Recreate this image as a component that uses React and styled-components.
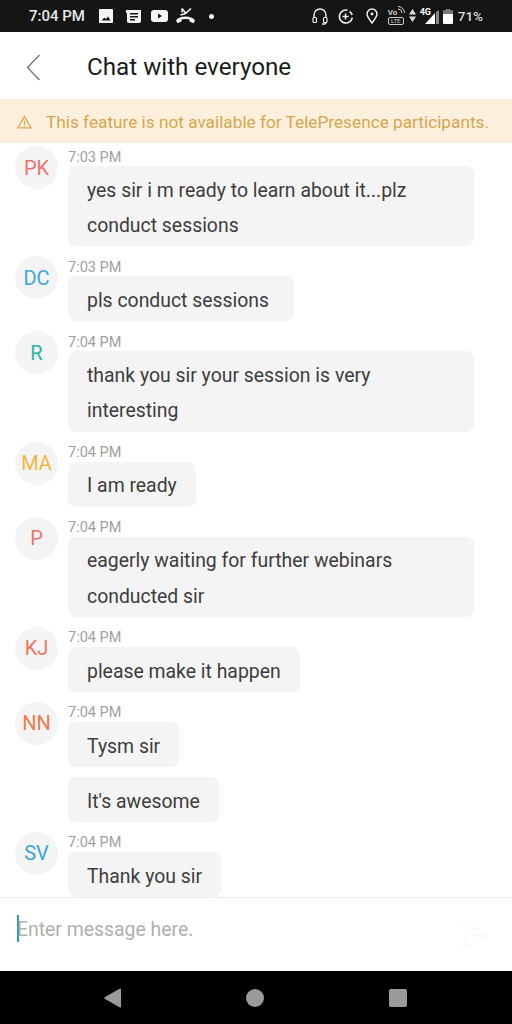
import styled, { createGlobalStyle } from "styled-components";

const messages = [
  { initials: "PK", color: "#e8746d", time: "7:03 PM", texts: ["yes sir i m ready to learn about it...plz conduct sessions"] },
  { initials: "DC", color: "#3ea8d4", time: "7:03 PM", texts: ["pls conduct sessions"], padRight: 25 },
  { initials: "R", color: "#2fb3a0", time: "7:04 PM", texts: ["thank you sir your session is very interesting"] },
  { initials: "MA", color: "#f2b63f", time: "7:04 PM", texts: ["I am ready"] },
  { initials: "P", color: "#f0766c", time: "7:04 PM", texts: ["eagerly waiting for further webinars conducted sir"] },
  { initials: "KJ", color: "#ee7660", time: "7:04 PM", texts: ["please make it happen"] },
  { initials: "NN", color: "#ee7b48", time: "7:04 PM", texts: ["Tysm sir", "It's awesome"] },
  { initials: "SV", color: "#3aa5d8", time: "7:04 PM", texts: ["Thank you sir"] },
];

export default function App() {
  return (
    <Screen>
      <GlobalStyle />
      <StatusBar>
        <StatusGroup>
          <Clock>7:04 PM</Clock>
          <Slot $left={15}>
            <svg width="14" height="14" viewBox="0 0 14 14">
              <path fill="#f4f4f4" fillRule="evenodd" d="M1 0h12a1 1 0 0 1 1 1v12a1 1 0 0 1-1 1H1a1 1 0 0 1-1-1V1a1 1 0 0 1 1-1z M2.500 11.500h9L9 7.500 7 10 5.500 8.500z" />
            </svg>
          </Slot>
          <Slot $left={13}>
            <svg width="15" height="13" viewBox="0 0 15 13">
              <path fill="#f4f4f4" fillRule="evenodd" d="M0 0h15v11a2 2 0 0 1-2 2H3a2 2 0 0 1-2-2V3H0z M4 3v1.500h8V3z M4 6v1.500h8V6z M4 9v1.500h5V9z" />
            </svg>
          </Slot>
          <Slot $left={10}>
            <svg width="17" height="12" viewBox="0 0 17 12">
              <path fill="#f4f4f4" fillRule="evenodd" d="M3 0h11a3 3 0 0 1 3 3v6a3 3 0 0 1-3 3H3a3 3 0 0 1-3-3V3a3 3 0 0 1 3-3z M7 3.500v5L11 6z" />
            </svg>
          </Slot>
          <Slot $left={8}>
            <svg width="19" height="16" viewBox="0 0 19 16">
              <path fill="none" stroke="#f4f4f4" strokeWidth="1.500" d="M4.500 7l5 -1.500L15 .5" />
              <path fill="none" stroke="#f4f4f4" strokeWidth="1.500" d="M6 .5l4 5M6 .5v4" />
              <path fill="#f4f4f4" d="M0 12.500c2-3 5.500-4 9.500-4s7.500 1 9.500 4l-1.500 2.800-4-1.800v-2c-2.500-.7-5.500-.7-8 0v2l-4 1.800z" />
            </svg>
          </Slot>
          <Dot />
        </StatusGroup>
        <StatusGroup>
          <Slot>
            <svg width="16" height="17" viewBox="0 0 16 17">
              <path fill="none" stroke="#eee" strokeWidth="1.400" d="M2 10V7a6 6 0 0 1 12 0v3M14 13v1.500a1.500 1.500 0 0 1-1.500 1.500H10" />
              <rect x="1" y="9.500" width="3.500" height="5" rx="1" fill="#151515" stroke="#eee" strokeWidth="1.200" />
              <rect x="11.500" y="9.500" width="3.500" height="5" rx="1" fill="#151515" stroke="#eee" strokeWidth="1.200" />
            </svg>
          </Slot>
          <Slot $left={10}>
            <svg width="15" height="15" viewBox="0 0 15 15">
              <path fill="none" stroke="#eee" strokeWidth="1.600" d="M9.500 1.200a6.500 6.500 0 1 0 4.800 7.500M11.500 2.500a6.500 6.500 0 0 1 2.700 3.500" />
              <path stroke="#eee" strokeWidth="1.500" d="M7.500 4.500v6M4.500 7.500h6" />
            </svg>
          </Slot>
          <Slot $left={13}>
            <svg width="12" height="16" viewBox="0 0 12 16">
              <path fill="none" stroke="#eee" strokeWidth="1.500" d="M6 15C3.500 11.500 1 8.500 1 6a5 5 0 0 1 10 0c0 2.500-2.500 5.500-5 9z" />
              <circle cx="6" cy="6" r="1.400" fill="#eee" />
            </svg>
          </Slot>
          <Volte>
            <VolteArcs width="7" height="9" viewBox="0 0 7 9">
              <path fill="none" stroke="#ccc" strokeWidth="1" d="M0 3a4 4 0 0 1 4 4M0 .5a6.500 6.500 0 0 1 6.500 6.500" />
            </VolteArcs>
            <VolteTop>Vo</VolteTop>
            <VolteBox>LTE</VolteBox>
          </Volte>
          <Slot $left={5}>
            <svg width="7" height="14" viewBox="0 0 7 14">
              <path fill="#ddd" d="M3.500 0L7 5.500H0zM0 7.500h7l-3.500 5.500z" />
            </svg>
          </Slot>
          <Signal>
            <NetworkType>4G</NetworkType>
            <svg width="14" height="14" viewBox="0 0 14 14">
              <path fill="#fff" d="M10 3v11H0z" />
              <path fill="#888" d="M11 2l3-2v14h-3z" />
            </svg>
          </Signal>
          <Slot $left={4}>
            <svg width="10" height="15" viewBox="0 0 10 15">
              <path fill="#777" d="M3 0h4v1h2a1 1 0 0 1 1 1v3H0V2a1 1 0 0 1 1-1h2z" />
              <path fill="#fff" d="M0 5h10v9a1 1 0 0 1-1 1H1a1 1 0 0 1-1-1z" />
            </svg>
          </Slot>
          <Battery>71%</Battery>
        </StatusGroup>
      </StatusBar>

      <Header>
        <BackButton>
          <svg width="15" height="27" viewBox="0 0 15 27">
            <path fill="none" stroke="#777" strokeWidth="1.400" d="M13.500 1L1.500 13.500 13.500 26" />
          </svg>
        </BackButton>
        <Title>Chat with everyone</Title>
      </Header>

      <Notice>
        <svg width="15" height="14" viewBox="0 0 15 14">
          <path fill="none" stroke="#d8a64e" strokeWidth="1.300" d="M7.500 1.500L14 12.800H1z" />
          <path stroke="#d8a64e" strokeWidth="1.300" d="M7.500 5.500v4M7.500 10.300v1.200" />
        </svg>
        <NoticeText>This feature is not available for TelePresence participants.</NoticeText>
      </Notice>

      <MessageList>
        {messages.map((msg) => (
          <MessageRow key={msg.initials}>
            <Avatar $color={msg.color}>{msg.initials}</Avatar>
            <MessageBody>
              <Time>{msg.time}</Time>
              {msg.texts.map((text) => (
                <Bubble key={text} $padRight={msg.padRight}>{text}</Bubble>
              ))}
            </MessageBody>
          </MessageRow>
        ))}
      </MessageList>

      <Composer>
        <Caret />
        <Placeholder>Enter message here.</Placeholder>
        <SendIcon>
          <svg width="27" height="28" viewBox="0 0 27 28">
            <path fill="none" stroke="#f8f8f8" strokeWidth="1.200" d="M1 1l25 13L1 27l4-13zM5 14h21" />
          </svg>
        </SendIcon>
      </Composer>

      <NavBar>
        <svg width="18" height="20" viewBox="0 0 18 20">
          <path fill="#9a9a9a" d="M17 1v18a1 1 0 0 1-1 .6L1 11a1.200 1.200 0 0 1 0-2L16 .4a1 1 0 0 1 1 .6z" />
        </svg>
        <HomeButton />
        <RecentButton />
      </NavBar>
    </Screen>
  );
}

const GlobalStyle = createGlobalStyle`
  html, body {
    margin: 0;
    padding: 0;
    background: #fff;
  }
  * {
    box-sizing: border-box;
  }
`;

const Screen = styled.div`
  width: 512px;
  height: 1024px;
  display: flex;
  flex-direction: column;
  overflow: hidden;
  font-family: Roboto, "Liberation Sans", sans-serif;
  background: #fff;
`;

const StatusBar = styled.div`
  height: 32px;
  flex-shrink: 0;
  display: flex;
  align-items: center;
  justify-content: space-between;
  padding: 0 29px;
  background: #151515;
  color: #fff;
`;

const StatusGroup = styled.div`
  display: flex;
  align-items: center;
`;

const Slot = styled.span`
  display: flex;
  margin-left: ${(props) => props.$left || 0}px;
`;

const Clock = styled.span`
  width: 55px;
  font-size: 15px;
  font-weight: 500;
  white-space: nowrap;
  color: #e8e8e8;
`;

const Dot = styled.span`
  width: 5px;
  height: 5px;
  margin-left: 14px;
  border-radius: 50%;
  background: #f4f4f4;
`;

const Volte = styled.div`
  position: relative;
  width: 16px;
  margin-left: 10px;
  display: flex;
  flex-direction: column;
  align-items: flex-start;
  color: #ccc;
`;

const VolteArcs = styled.svg`
  position: absolute;
  top: -2px;
  right: -1px;
`;

const VolteTop = styled.span`
  font-size: 8px;
  font-weight: 700;
  line-height: 9px;
`;

const VolteBox = styled.span`
  width: 16px;
  height: 8px;
  border: 1px solid #ccc;
  border-radius: 2px;
  font-size: 6px;
  line-height: 6px;
  text-align: center;
`;

const Signal = styled.div`
  position: relative;
  width: 19px;
  height: 15px;
  margin-left: 4px;
  display: flex;
  justify-content: flex-end;
  align-items: flex-end;
`;

const NetworkType = styled.span`
  position: absolute;
  left: 0;
  top: -2px;
  font-size: 9px;
  font-weight: 700;
`;

const Battery = styled.span`
  margin-left: 5px;
  font-size: 13.500px;
  font-weight: 500;
  color: #ddd;
`;

const Header = styled.div`
  height: 68px;
  flex-shrink: 0;
  display: flex;
  align-items: center;
  padding-top: 3px;
  border-bottom: 1px solid #ececec;
  background: #fff;
`;

const BackButton = styled.div`
  width: 87px;
  padding-left: 26px;
  display: flex;
  align-items: center;
`;

const Title = styled.div`
  font-size: 24.200px;
  color: #1c1c1c;
`;

const Notice = styled.div`
  height: 43px;
  flex-shrink: 0;
  display: flex;
  align-items: center;
  gap: 14px;
  padding-left: 17px;
  background: #fcf0dd;
`;

const NoticeText = styled.div`
  font-size: 17.230px;
  color: #d6a64e;
  white-space: nowrap;
`;

const MessageList = styled.div`
  flex: 1;
  min-height: 0;
  overflow: hidden;
  display: flex;
  flex-direction: column;
  gap: 10px;
  padding: 3px 38px 0 15px;
`;

const MessageRow = styled.div`
  display: flex;
  gap: 10px;
  flex-shrink: 0;
`;

const Avatar = styled.div`
  width: 43px;
  height: 43px;
  flex-shrink: 0;
  border-radius: 50%;
  display: flex;
  align-items: center;
  justify-content: center;
  background: #f4f4f4;
  color: ${(props) => props.$color};
  font-size: 20px;
`;

const MessageBody = styled.div`
  flex: 1;
  display: flex;
  flex-direction: column;
  align-items: flex-start;
  gap: 10px;
`;

const Time = styled.div`
  height: 20px;
  margin-bottom: -10px;
  padding-top: 1.500px;
  font-size: 14.500px;
  line-height: 20px;
  color: #a0a0a0;
`;

const Bubble = styled.div`
  padding: 6.600px ${(props) => props.$padRight || 19}px 3.050px 19px;
  border-radius: 8px;
  background: #f4f4f4;
  color: #3d3d3d;
  font-size: 19.400px;
  line-height: 35.350px;
`;

const Composer = styled.div`
  position: relative;
  height: 74px;
  flex-shrink: 0;
  display: flex;
  align-items: center;
  padding: 0 23px 12px 17px;
  border-top: 1px solid #ececec;
  background: #fff;
`;

const Caret = styled.span`
  width: 2px;
  height: 27px;
  background: #2b9db8;
`;

const Placeholder = styled.span`
  flex: 1;
  margin-left: -2px;
  padding-top: 1px;
  font-size: 19.400px;
  color: #b0b0b0;
`;

const SendIcon = styled.div`
  display: flex;
  margin-top: 12px;
`;

const NavBar = styled.div`
  height: 53px;
  flex-shrink: 0;
  display: flex;
  align-items: center;
  padding-left: 104px;
  gap: 125px;
  background: #000;
`;

const HomeButton = styled.span`
  width: 18px;
  height: 18px;
  margin-left: -1px;
  border-radius: 50%;
  background: #9a9a9a;
`;

const RecentButton = styled.span`
  width: 18px;
  height: 18px;
  border-radius: 2px;
  background: #9a9a9a;
`;
